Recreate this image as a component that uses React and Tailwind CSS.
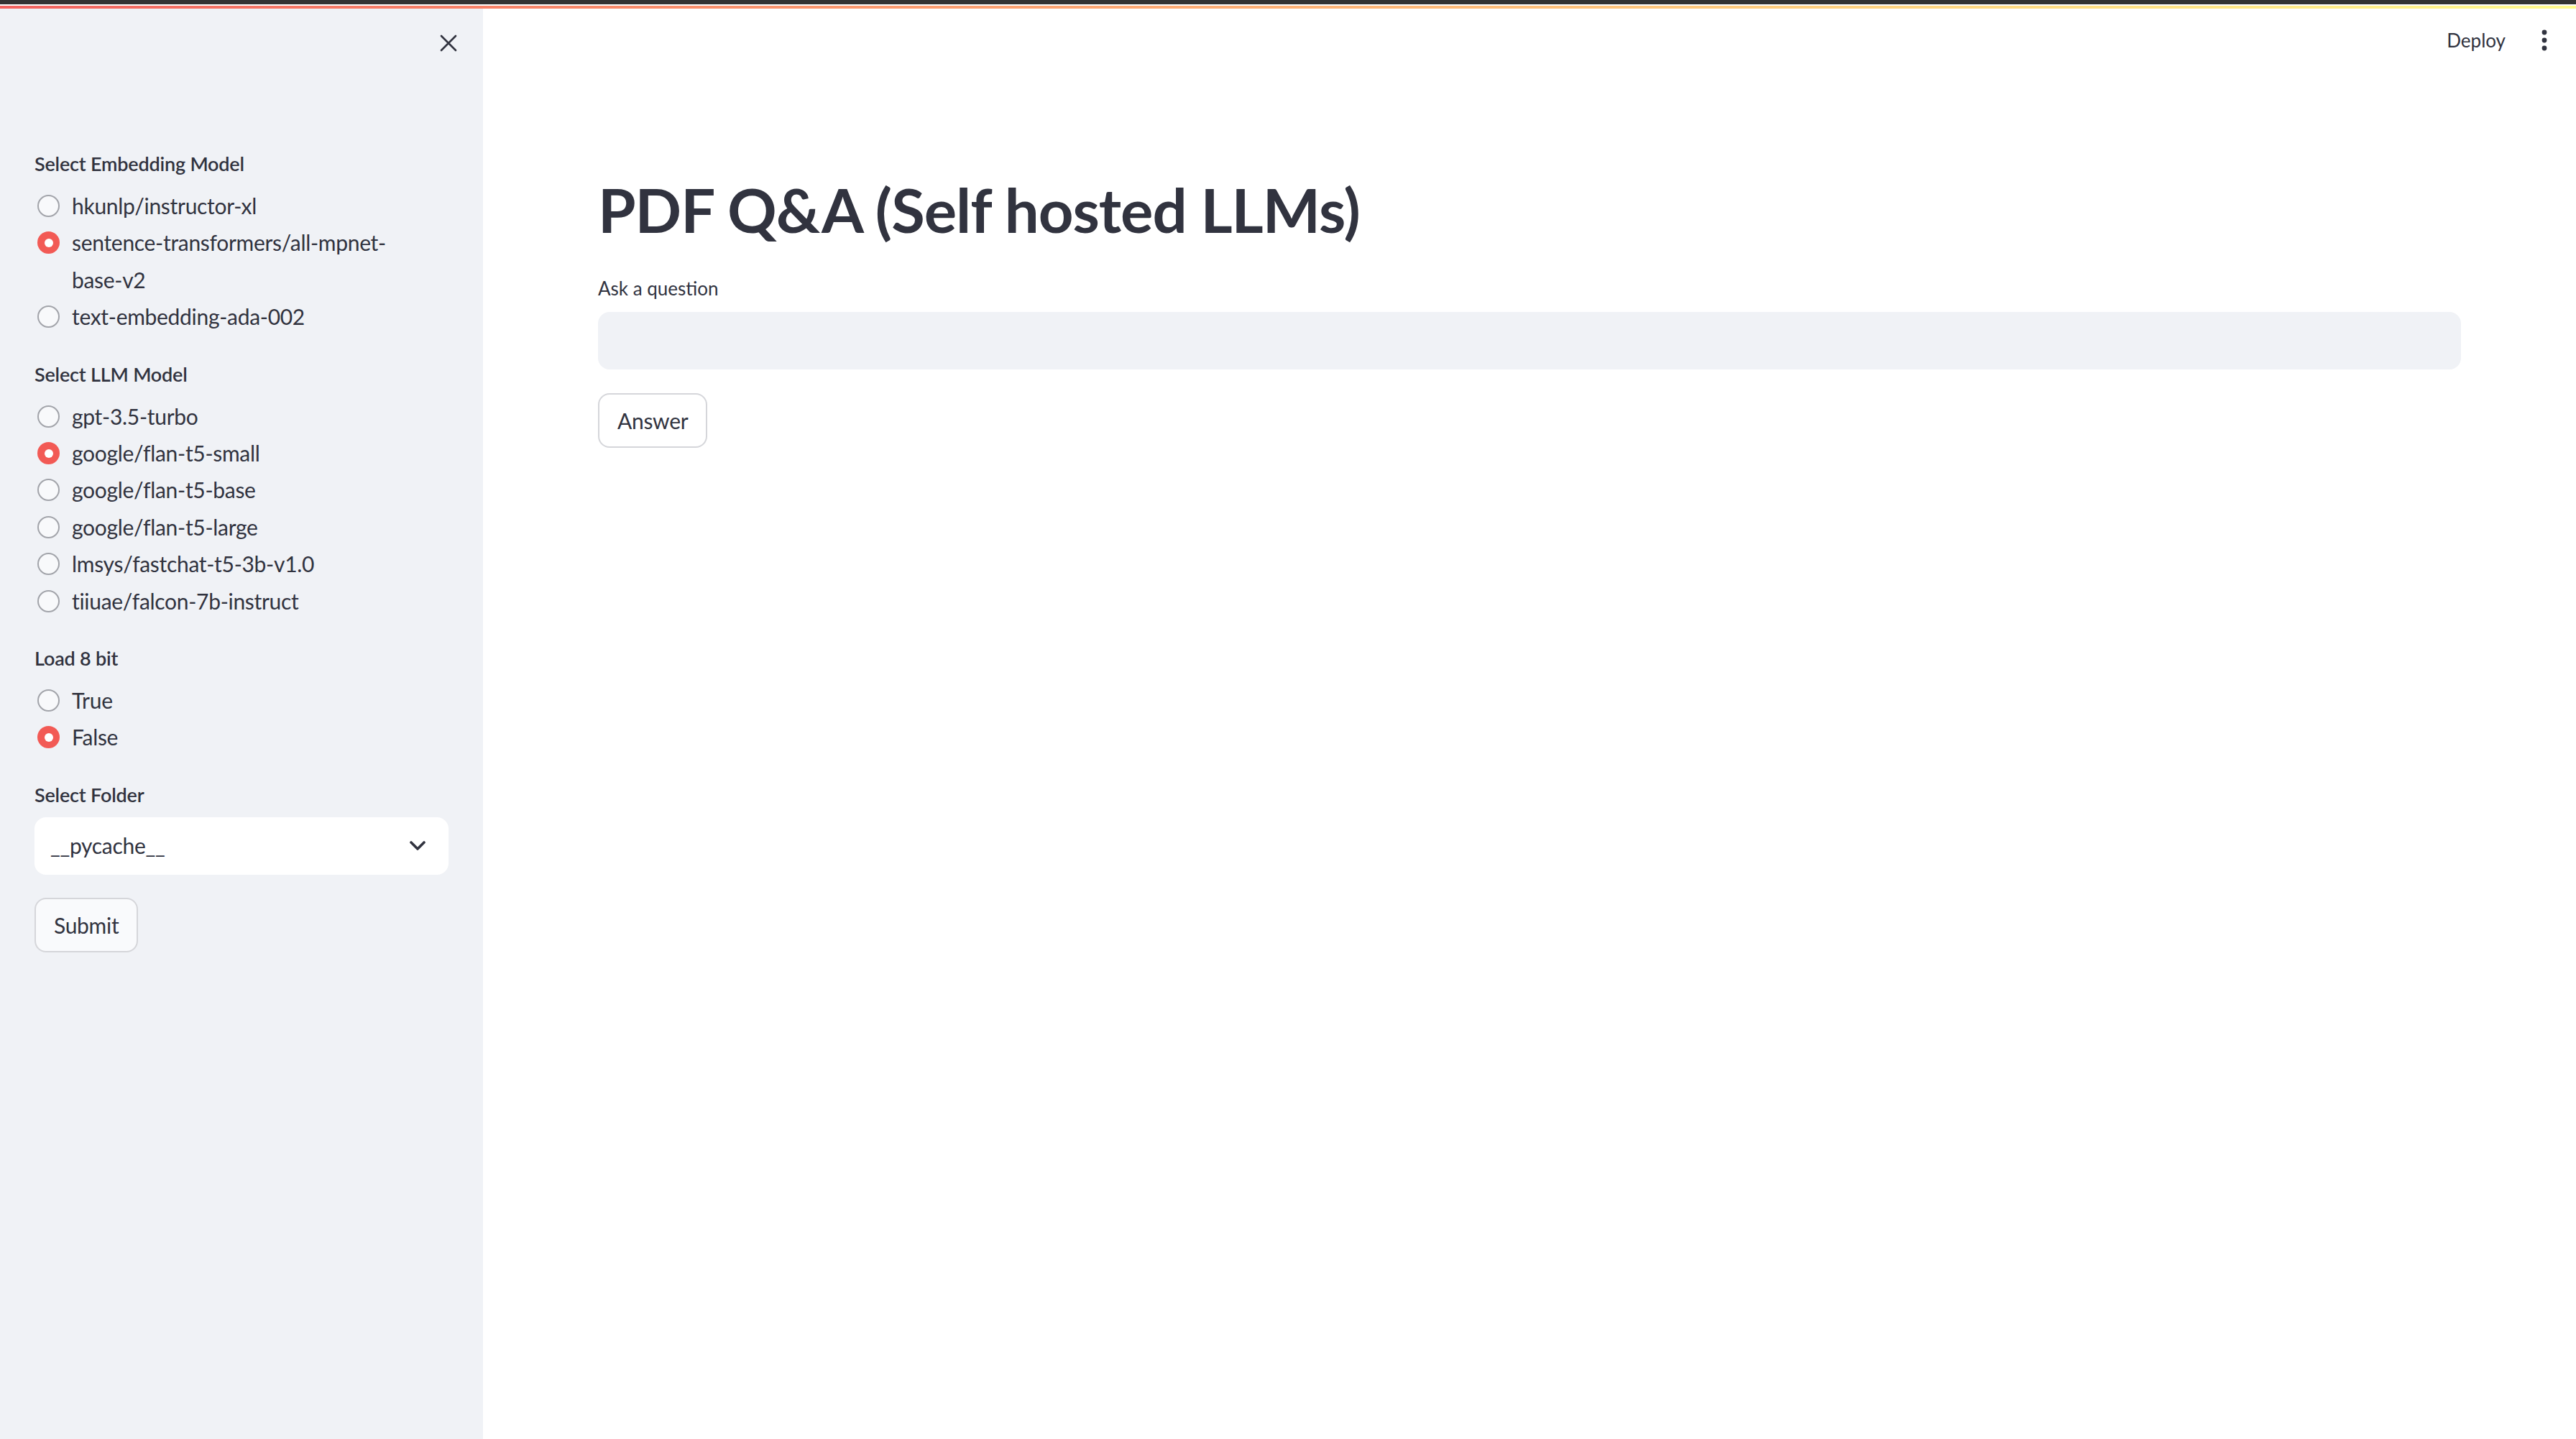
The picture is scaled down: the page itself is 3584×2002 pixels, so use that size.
import React, { useState } from 'react';

const embeddingModels = ['hkunlp/instructor-xl', 'sentence-transformers/all-mpnet-base-v2', 'text-embedding-ada-002'];
const llmModels = ['gpt-3.5-turbo', 'google/flan-t5-small', 'google/flan-t5-base', 'google/flan-t5-large', 'lmsys/fastchat-t5-3b-v1.0', 'tiiuae/falcon-7b-instruct'];
const bitOptions = ['True', 'False'];

function RadioDot({ checked }) {
  if (checked) {
    return (
      <span className="mt-[10px] ml-[4px] flex h-[31px] w-[31px] shrink-0 items-center justify-center rounded-full bg-[#f25a55]">
        <span className="h-[12px] w-[12px] rounded-full bg-white" />
      </span>
    );
  }
  return <span className="mt-[10px] ml-[4px] h-[31px] w-[31px] shrink-0 rounded-full border-2 border-[#a2a4aa] bg-[#f8f9fb]" />;
}

function RadioGroup({ label, options, value, onChange }) {
  return (
    <div className="flex flex-col">
      <div className="h-[44px] text-[27px] font-semibold leading-[44px] tracking-[-0.2px]">{label}</div>
      <div className="mt-[11px] flex flex-col">
        {options.map((opt) => (
          <label key={opt} className="flex cursor-pointer items-start gap-[17px]" onClick={() => onChange(opt)}>
            <RadioDot checked={opt === value} />
            <span className="text-[30px] leading-[51.4px] tracking-[-0.3px]">
              {opt === 'sentence-transformers/all-mpnet-base-v2' ? (
                <>sentence-transformers/all-mpnet-<br />base-v2</>
              ) : opt}
            </span>
          </label>
        ))}
      </div>
    </div>
  );
}

function App() {
  const [embedding, setEmbedding] = useState('sentence-transformers/all-mpnet-base-v2');
  const [llm, setLlm] = useState('google/flan-t5-small');
  const [load8bit, setLoad8bit] = useState('False');
  const [question, setQuestion] = useState('');

  return (
    <div className="flex h-[2002px] w-full flex-col bg-white text-[#31333f] [font-family:Lato,sans-serif]">
      {/* top strip */}
      <div className="h-[6px] w-full bg-[#333333]" />
      <div className="h-[2px] w-full bg-white" />
      <div className="h-[4px] w-full bg-gradient-to-r from-[#f26360] to-[#fffa8c]" />

      <div className="flex flex-1 overflow-hidden">
        {/* sidebar */}
        <aside className="flex w-[672px] shrink-0 flex-col bg-[#f0f2f6] px-[48px]">
          <div className="flex justify-end pt-[36px]">
            <button className="mr-[-12px] flex h-[24px] w-[24px] items-center justify-center">
              <svg width="24" height="24" viewBox="0 0 24 24" fill="none" stroke="#31333f" strokeWidth="2.6" strokeLinecap="round">
                <path d="M2 2 L22 22 M22 2 L2 22" />
              </svg>
            </button>
          </div>

          <div className="mt-[134px] flex flex-col gap-[32px]">
            <RadioGroup label="Select Embedding Model" options={embeddingModels} value={embedding} onChange={setEmbedding} />
            <RadioGroup label="Select LLM Model" options={llmModels} value={llm} onChange={setLlm} />
            <RadioGroup label="Load 8 bit" options={bitOptions} value={load8bit} onChange={setLoad8bit} />

            <div className="flex flex-col">
              <div className="h-[44px] text-[27px] font-semibold leading-[44px] tracking-[-0.2px]">Select Folder</div>
              <div className="mt-[9px] flex h-[80px] items-center justify-between rounded-[16px] bg-white pl-[22px] pr-[32px]">
                <span className="text-[30px] tracking-[-0.3px]">__pycache__</span>
                <svg width="22" height="14" viewBox="0 0 22 14" fill="none" stroke="#31333f" strokeWidth="3.6" strokeLinecap="round" strokeLinejoin="round">
                  <path d="M2 2 L11 11 L20 2" />
                </svg>
              </div>
            </div>

            <div>
              <button className="h-[76px] rounded-[16px] border-2 border-[#d5d6da] bg-[#f9fafc] px-[25px] text-[30px] leading-none tracking-[-0.3px]">
                Submit
              </button>
            </div>
          </div>
        </aside>

        {/* main */}
        <main className="relative flex flex-1 flex-col px-[160px]">
          <div className="absolute right-[40px] top-[-12px] flex h-[112px] items-center gap-[50px]">
            <span className="text-[26px]">Deploy</span>
            <svg width="8" height="30" viewBox="0 0 8 30" fill="#31333f">
              <circle cx="4" cy="4" r="3.4" />
              <circle cx="4" cy="15" r="3.4" />
              <circle cx="4" cy="26" r="3.4" />
            </svg>
          </div>

          <h1 className="mt-[226px] text-[85px] font-bold leading-[106px] tracking-[-1px]">PDF Q&amp;A (Self hosted LLMs)</h1>

          <div className="mt-[35px] h-[44px] text-[26px] leading-[44px]">Ask a question</div>
          <input
            value={question}
            onChange={(e) => setQuestion(e.target.value)}
            className="mt-[11px] h-[80px] w-full rounded-[16px] bg-[#f0f2f6] px-[24px] text-[30px] outline-none"
          />
          <div className="mt-[33px]">
            <button className="h-[76px] rounded-[16px] border-2 border-[#d5d6da] bg-white px-[25px] text-[30px] leading-none tracking-[-0.3px]">
              Answer
            </button>
          </div>
        </main>
      </div>
    </div>
  );
}

export default App;
